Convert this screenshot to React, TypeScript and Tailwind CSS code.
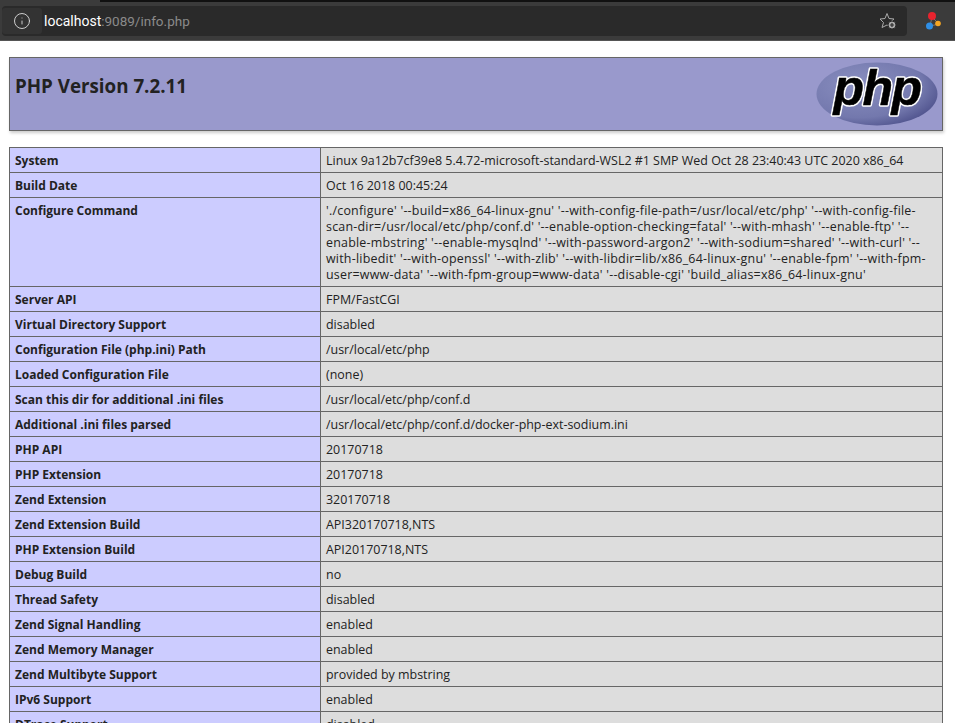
import { Info } from 'lucide-react';

const rows: [string, string][] = [
  ['System', 'Linux 9a12b7cf39e8 5.4.72-microsoft-standard-WSL2 #1 SMP Wed Oct 28 23:40:43 UTC 2020 x86_64'],
  ['Build Date', 'Oct 16 2018 00:45:24'],
  ['Configure Command', "'./configure' '--build=x86_64-linux-gnu' '--with-config-file-path=/usr/local/etc/php' '--with-config-file-scan-dir=/usr/local/etc/php/conf.d' '--enable-option-checking=fatal' '--with-mhash' '--enable-ftp' '--enable-mbstring' '--enable-mysqlnd' '--with-password-argon2' '--with-sodium=shared' '--with-curl' '--with-libedit' '--with-openssl' '--with-zlib' '--with-libdir=lib/x86_64-linux-gnu' '--enable-fpm' '--with-fpm-user=www-data' '--with-fpm-group=www-data' '--disable-cgi' 'build_alias=x86_64-linux-gnu'"],
  ['Server API', 'FPM/FastCGI'],
  ['Virtual Directory Support', 'disabled'],
  ['Configuration File (php.ini) Path', '/usr/local/etc/php'],
  ['Loaded Configuration File', '(none)'],
  ['Scan this dir for additional .ini files', '/usr/local/etc/php/conf.d'],
  ['Additional .ini files parsed', '/usr/local/etc/php/conf.d/docker-php-ext-sodium.ini'],
  ['PHP API', '20170718'],
  ['PHP Extension', '20170718'],
  ['Zend Extension', '320170718'],
  ['Zend Extension Build', 'API320170718,NTS'],
  ['PHP Extension Build', 'API20170718,NTS'],
  ['Debug Build', 'no'],
  ['Thread Safety', 'disabled'],
  ['Zend Signal Handling', 'enabled'],
  ['Zend Memory Manager', 'enabled'],
  ['Zend Multibyte Support', 'provided by mbstring'],
  ['IPv6 Support', 'enabled'],
  ['DTrace Support', 'disabled'],
];

function PhpLogo() {
  return (
    <svg width="122" height="64" viewBox="0 0 122 64">
      <defs>
        <radialGradient id="php-bg" cx="35%" cy="35%" r="75%">
          <stop offset="0%" stopColor="#8a8fc0" />
          <stop offset="70%" stopColor="#7378ad" />
          <stop offset="100%" stopColor="#4c4f8a" />
        </radialGradient>
        <text
          id="php-word"
          x="61"
          y="43"
          textAnchor="middle"
          fontFamily="'Liberation Sans', sans-serif"
          fontSize="50"
          fontWeight="700"
          fontStyle="italic"
          letterSpacing="-1.5"
        >
          php
        </text>
      </defs>
      <ellipse cx="61" cy="32" rx="60.5" ry="31.5" fill="url(#php-bg)" />
      <use href="#php-word" fill="#fff" stroke="#fff" strokeWidth="3.5" strokeLinejoin="round" />
      <use href="#php-word" fill="#000" stroke="#000" strokeWidth="0.5" />
    </svg>
  );
}

function ExtensionIcon() {
  return (
    <svg width="18" height="20" viewBox="0 0 18 20">
      <path d="M7 6 L5 15 M7 6 L14 13 M5 15 L14 13" stroke="#777" strokeWidth="1" />
      <circle cx="7" cy="5" r="4" fill="#e8232e" />
      <circle cx="4.5" cy="15" r="3.5" fill="#2f8fe6" />
      <circle cx="13" cy="12.5" r="2.8" fill="#f5a623" />
    </svg>
  );
}

export default function App() {
  return (
    <div className="h-[723px] overflow-hidden bg-white font-['Open_Sans','Noto_Sans',sans-serif] text-[12px] text-[#222]">
      <div className="h-[41px] bg-[#3b3b3b] border-b border-[#555] relative">
        <div className="absolute left-[100px] right-0 top-0 h-[2px] bg-[#111]" />
        <div className="flex items-center gap-[18px] pt-[6px] pl-[2px] pr-[12px]">
          <div className="flex-1 h-[30px] bg-[#2a2a2a] rounded-[4px] flex items-center">
            <div className="w-[40px] h-[26px] bg-[#333] rounded-[3px] flex items-center justify-center">
              <Info className="w-[18px] h-[18px] text-[#ddd]" strokeWidth={1.2} />
            </div>
            <span className="ml-[2px] text-[14px] text-white font-['Roboto',sans-serif]">localhost</span>
            <span className="text-[13.5px] text-[#8a8a8a] font-['Roboto',sans-serif]">:9089/info.php</span>
            <div className="ml-auto mr-[10px] relative w-[18px] h-[18px]">
              <svg width="18" height="18" viewBox="0 0 18 18" fill="none" stroke="#aaa" strokeWidth="1">
                <path d="M8 1.5 L10 6.5 L15 7 L11 10.5 L12 15 L8 13 L3 15.5 L4.5 10.5 L1 7 L6 6.5 Z" />
                <circle cx="13" cy="13" r="4" fill="#aaa" stroke="#2a2a2a" />
                <path d="M11 13 H15 M13 11 V15" stroke="#2a2a2a" strokeWidth="1.2" />
              </svg>
            </div>
          </div>
          <ExtensionIcon />
        </div>
      </div>

      <div className="w-[934px] ml-[9px] mt-[16px]">
        <div className="h-[74px] bg-[#99c] border border-[#666] shadow-[1px_2px_3px_#ccc] flex justify-between pl-[5px] pr-[4px]">
          <h1 className="text-[18.75px] leading-[20px] font-bold mt-[18px]">PHP Version 7.2.11</h1>
          <div className="mt-[4px]">
            <PhpLogo />
          </div>
        </div>

        <table className="w-full mt-[16px] border-collapse table-fixed">
          <colgroup>
            <col className="w-[311px]" />
            <col />
          </colgroup>
          <tbody>
            {rows.map(([name, value]) => (
              <tr key={name}>
                <td className="bg-[#ccf] border border-[#666] px-[5px] pt-[5px] pb-[3px] leading-[16px] font-bold align-top">{name}</td>
                <td className={`bg-[#ddd] border border-[#666] px-[5px] pt-[5px] pb-[3px] text-[12.45px] leading-[16px] align-top break-words ${name === 'Configure Command' ? 'tracking-[0.22px]' : ''}`}>{value}</td>
              </tr>
            ))}
          </tbody>
        </table>
      </div>
    </div>
  );
}
